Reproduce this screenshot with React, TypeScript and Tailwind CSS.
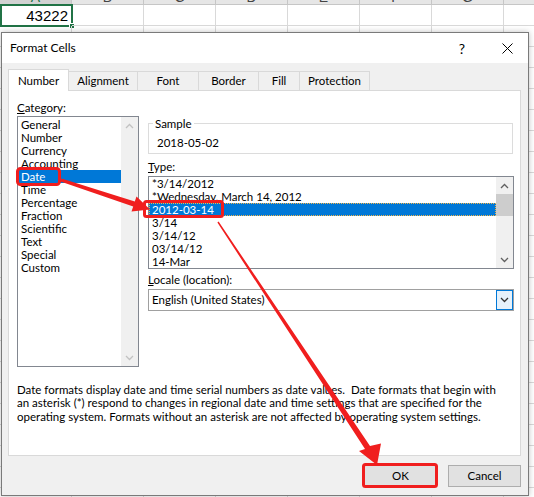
import React from "react";

const cols = ["A", "B", "C", "D", "E", "F", "G", "H"];
const categories = [
  "General",
  "Number",
  "Currency",
  "Accounting",
  "Date",
  "Time",
  "Percentage",
  "Fraction",
  "Scientific",
  "Text",
  "Special",
  "Custom",
];
const types = [
  "*3/14/2012",
  "*Wednesday, March 14, 2012",
  "2012-03-14",
  "3/14",
  "3/14/12",
  "03/14/12",
  "14-Mar",
];

function Chevron({ dir, color }: { dir: "up" | "down"; color: string }) {
  return (
    <svg width="9" height="6" viewBox="0 0 9 6">
      <path
        d={dir === "up" ? "M1 5 L4.5 1.5 L8 5" : "M1 1 L4.5 4.5 L8 1"}
        fill="none"
        stroke={color}
        strokeWidth="1.3"
      />
    </svg>
  );
}

export default function App() {
  const rows = Array.from({ length: 24 }, (_, i) => i);
  return (
    <div className="relative h-[497px] w-[534px] overflow-hidden bg-white font-[Lato,sans-serif] text-black">
      {/* spreadsheet background */}
      <div className="-mt-[15px] flex h-[20px] bg-[#e6e6e6]">
        {cols.map((c, i) => (
          <div
            key={c}
            className={
              i === 0
                ? "flex h-[20px] w-[72px] shrink-0 items-center justify-center border-b border-r border-[#c6c6c6] bg-[#d2d2d2] pt-[6px] font-['Liberation_Sans',sans-serif] text-[14px] text-[#217346]"
                : "flex h-[20px] w-[72px] shrink-0 items-center justify-center border-b border-r border-[#c6c6c6] pt-[6px] font-['Liberation_Sans',sans-serif] text-[14px] text-[#444444]"
            }
          >
            {c}
          </div>
        ))}
      </div>
      {rows.map((r) => (
        <div key={r} className="flex h-[21px]">
          {cols.map((c, i) => (
            <div
              key={c}
              className="relative flex h-[21px] w-[72px] shrink-0 items-center justify-end border-b border-r border-[#d9d9d9] pr-[3px] font-['Liberation_Sans',sans-serif] text-[15px]"
            >
              {r === 0 && i === 0 && (
                <>
                  <span className="mt-[2px]">43222</span>
                  <div className="absolute left-0 top-[-1px] h-[23px] w-[73px] border-2 border-[#217346]" />
                  <div className="absolute bottom-[-4px] right-[-4px] h-[6px] w-[6px] border border-white bg-[#217346]" />
                </>
              )}
            </div>
          ))}
        </div>
      ))}

      {/* dialog window */}
      <div className="absolute left-[1px] top-[32px] flex h-[464px] w-[528px] flex-col border border-[#7a7a7a] bg-[#f0f0f0] text-[11.5px] shadow-[0_0_6px_rgba(0,0,0,0.25)]">
        <div className="flex h-[30px] shrink-0 items-center bg-white pl-[8px] pr-[11px] text-[12px]">
          <span>Format Cells</span>
          <div className="ml-auto flex items-center gap-[25px]">
            <span className="flex w-[20px] justify-center text-[14px]">?</span>
            <span className="flex w-[20px] justify-center">
              <svg width="11" height="11" viewBox="0 0 11 11">
                <path d="M0.5 0.5 L10.5 10.5 M10.5 0.5 L0.5 10.5" stroke="#000" strokeWidth="1" />
              </svg>
            </span>
          </div>
        </div>

        <div className="flex flex-1 flex-col pl-[6px] pr-[7px] pt-[6px]">
          {/* tabs */}
          <div className="flex h-[21px] items-end">
            <div className="relative z-10 -mb-px flex h-[22px] w-[61px] items-center justify-center border border-b-0 border-[#d9d9d9] bg-white">
              Number
            </div>
            <div className="-ml-px flex h-[19px] w-[70px] items-center justify-center border border-b-0 border-[#d9d9d9]">
              Alignment
            </div>
            <div className="-ml-px flex h-[19px] w-[62px] items-center justify-center border border-b-0 border-[#d9d9d9]">
              Font
            </div>
            <div className="-ml-px flex h-[19px] w-[61px] items-center justify-center border border-b-0 border-[#d9d9d9]">
              Border
            </div>
            <div className="-ml-px flex h-[19px] w-[42px] items-center justify-center border border-b-0 border-[#d9d9d9]">
              Fill
            </div>
            <div className="-ml-px flex h-[19px] w-[71px] items-center justify-center border border-b-0 border-[#d9d9d9]">
              Protection
            </div>
          </div>

          {/* tab panel */}
          <div className="h-[366px] w-[513px] border border-[#d9d9d9] bg-white pl-[8px] pt-[9px]">
            <div className="flex gap-[9px]">
              {/* category column */}
              <div className="flex w-[122px] flex-col">
                <div className="mt-[1px] h-[14px] leading-[14px]">
                  <span className="underline">C</span>ategory:
                </div>
                <div className="mt-[1px] flex h-[251px] w-[122px] border border-[#828790] bg-white">
                  <div className="flex-1 pt-[1px]">
                    {categories.map((c) => (
                      <div
                        key={c}
                        className={
                          c === "Date"
                            ? "h-[13px] bg-[#0078d7] pl-[3px] leading-[13px] text-white"
                            : "h-[13px] pl-[3px] leading-[13px]"
                        }
                      >
                        {c}
                      </div>
                    ))}
                  </div>
                  <div className="flex w-[17px] flex-col justify-between bg-[#f0f0f0]">
                    <div className="flex h-[17px] items-center justify-center">
                      <Chevron dir="up" color="#c2c2c2" />
                    </div>
                    <div className="flex h-[17px] items-center justify-center">
                      <Chevron dir="down" color="#c2c2c2" />
                    </div>
                  </div>
                </div>
              </div>

              {/* right column */}
              <div className="flex w-[366px] flex-col">
                <div className="mt-[23px] h-[31px] w-[365px] border border-[#dcdcdc]">
                  <div className="-mt-[7px] ml-[4px] block h-[14px] w-fit bg-white px-[2px] leading-[14px]">
                    Sample
                  </div>
                  <div className="mt-[5px] h-[14px] pl-[8px] leading-[14px]">2018-05-02</div>
                </div>
                <div className="mt-[6px] h-[14px] leading-[14px]">
                  <span className="underline">T</span>ype:
                </div>
                <div className="mt-[2px] flex h-[93px] w-[366px] border border-[#828790] bg-white">
                  <div className="flex-1">
                    {types.map((t, i) => (
                      <div
                        key={t}
                        className={
                          i === 2
                            ? "h-[13px] bg-[#0078d7] pl-[3px] leading-[13px] text-white outline-1 -outline-offset-1 outline-dotted outline-[#f3b54a]"
                            : "h-[13px] pl-[3px] leading-[13px]"
                        }
                      >
                        {t}
                      </div>
                    ))}
                  </div>
                  <div className="flex w-[17px] flex-col bg-[#f0f0f0]">
                    <div className="flex h-[17px] items-center justify-center">
                      <Chevron dir="up" color="#606060" />
                    </div>
                    <div className="h-[22px] bg-[#cdcdcd]" />
                    <div className="flex-1" />
                    <div className="flex h-[17px] items-center justify-center">
                      <Chevron dir="down" color="#606060" />
                    </div>
                  </div>
                </div>
                <div className="mt-[4px] h-[14px] leading-[14px]">
                  <span className="underline">L</span>ocale (location):
                </div>
                <div className="mt-[2px] flex h-[22px] w-[366px] border border-[#a0a0a0] bg-white">
                  <div className="flex flex-1 items-center pl-[3px]">English (United States)</div>
                  <div className="flex w-[17px] items-center justify-center border border-[#0078d7] bg-[#e5f1fb]">
                    <Chevron dir="down" color="#333333" />
                  </div>
                </div>
              </div>
            </div>

            <div className="mt-[16px] whitespace-pre leading-[13.3px]">
              {"Date formats display date and time serial numbers as date values.  Date formats that begin with\nan asterisk (*) respond to changes in regional date and time settings that are specified for the\noperating system. Formats without an asterisk are not affected by operating system settings."}
            </div>
          </div>

          {/* buttons */}
          <div className="mt-[9px] flex justify-end gap-[11px]">
            <div className="flex h-[22px] w-[73px] items-center justify-center border border-[#0078d7] bg-[#e1e1e1]">
              OK
            </div>
            <div className="flex h-[22px] w-[73px] items-center justify-center border border-[#adadad] bg-[#e1e1e1]">
              Cancel
            </div>
          </div>
        </div>
      </div>

      {/* red annotations */}
      <svg
        className="pointer-events-none absolute left-0 top-0"
        width="534"
        height="497"
        viewBox="0 0 534 497"
      >
        <rect x="17.5" y="168.5" width="42" height="16" rx="3" fill="none" stroke="#f01e1e" strokeWidth="3" />
        <rect x="144.5" y="201.5" width="78" height="15" rx="2" fill="none" stroke="#f01e1e" strokeWidth="3" />
        <rect x="363.5" y="464.5" width="73" height="22" rx="2" fill="none" stroke="#f01e1e" strokeWidth="3" />
        <polygon
          points="61.5,178.6 134.8,201.6 136.5,196.4 150,209.5 131.5,211.6 133.2,206.4 60.5,181.4"
          fill="#f01e1e"
        />
        <polygon
          points="218.6,221.6 370,446 381,443.5 377,465 359,451 365,449 217.4,222.4"
          fill="#f01e1e"
        />
      </svg>
    </div>
  );
}
